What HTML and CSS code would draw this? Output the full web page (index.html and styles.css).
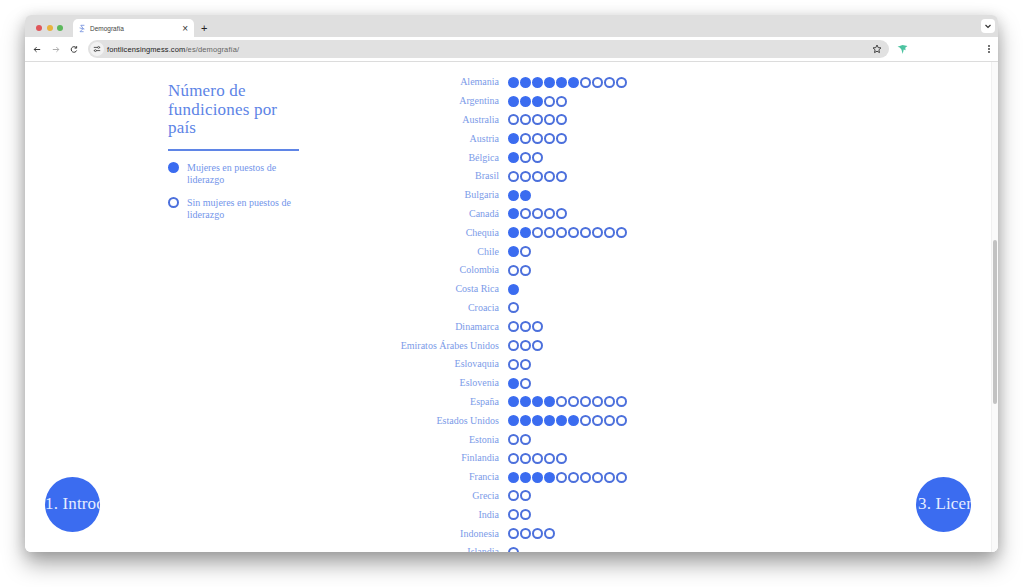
FILE: index.html
```html
<!DOCTYPE html>
<html lang="es">
<head>
<meta charset="utf-8">
<title>Demografía</title>
<link rel="stylesheet" href="styles.css">
</head>
<body>
<div class="window">
  <div class="tabstrip">
    <div class="lights"><i class="red"></i><i class="yellow"></i><i class="green"></i></div>
    <div class="tab">
      <svg class="favicon" viewBox="0 0 10 10"><path d="M8 1H3.500L6.500 5 2.500 9h4.500M2 4.200l6 1.600" fill="none" stroke="#6d8bdc" stroke-width="1"/></svg>
      <span class="tabtitle">Demografía</span>
      <span class="tabclose">×</span>
    </div>
    <span class="newtab">+</span>
    <span class="tabmenu"><svg viewBox="0 0 8 8"><path d="M1.500 3l2.500 2.500L6.500 3" fill="none" stroke="#333" stroke-width="1.200"/></svg></span>
  </div>
  <div class="toolbar">
    <svg class="navicon" viewBox="0 0 10 10"><path d="M9 5H1.500M4.500 2L1.500 5l3 3" fill="none" stroke="#333" stroke-width="1.200"/></svg>
    <svg class="navicon" viewBox="0 0 10 10"><path d="M1 5h7.500M5.500 2l3 3-3 3" fill="none" stroke="#aaa" stroke-width="1.200"/></svg>
    <svg class="navicon" viewBox="0 0 10 10"><path d="M8.300 6.200A3.500 3.500 0 1 1 7.600 2.600M8.300 0.800v2.500H5.800" fill="none" stroke="#333" stroke-width="1.200"/></svg>
    <div class="omnibox">
      <span class="sitechip"><svg viewBox="0 0 10 10"><path d="M1 3h5M8 3h1M1 7h1M4 7h5" stroke="#333" stroke-width="1"/><circle cx="7" cy="3" r="1.200" fill="none" stroke="#333" stroke-width=".8"/><circle cx="3" cy="7" r="1.200" fill="none" stroke="#333" stroke-width=".8"/></svg></span>
      <span class="url"><b>fontlicensingmess.com</b>/es/demografía/</span>
      <svg class="star" viewBox="0 0 10 10"><path d="M5 1l1.200 2.600 2.800.3-2.100 1.900.6 2.800L5 7.200 2.500 8.600l.6-2.800L1 3.900l2.800-.3z" fill="none" stroke="#444" stroke-width="1"/></svg>
    </div>
    <svg class="extension" viewBox="0 0 10 10"><path d="M.5 2.500L5 1l4.500.8-2 1.600.3 2.300-1.700-.8L5.200 9 4 5 2.500 3.200z" fill="#4cc3a0"/></svg>
    <span class="kebab"><i></i><i></i><i></i></span>
  </div>
  <div class="viewport">
    <div class="page">
      <aside class="sidebar">
        <h2 class="heading">Número de fundiciones por país</h2>
        <ul class="legend">
          <li class="legend-item"><span class="dot on"></span><span>Mujeres en puestos de liderazgo</span></li>
          <li class="legend-item"><span class="dot"></span><span>Sin mujeres en puestos de liderazgo</span></li>
        </ul>
      </aside>
      <div class="chart">
        <div class="row"><span class="name">Alemania</span><span class="dots"><i class="dot on"></i><i class="dot on"></i><i class="dot on"></i><i class="dot on"></i><i class="dot on"></i><i class="dot on"></i><i class="dot"></i><i class="dot"></i><i class="dot"></i><i class="dot"></i></span></div>
        <div class="row"><span class="name">Argentina</span><span class="dots"><i class="dot on"></i><i class="dot on"></i><i class="dot on"></i><i class="dot"></i><i class="dot"></i></span></div>
        <div class="row"><span class="name">Australia</span><span class="dots"><i class="dot"></i><i class="dot"></i><i class="dot"></i><i class="dot"></i><i class="dot"></i></span></div>
        <div class="row"><span class="name">Austria</span><span class="dots"><i class="dot on"></i><i class="dot"></i><i class="dot"></i><i class="dot"></i><i class="dot"></i></span></div>
        <div class="row"><span class="name">Bélgica</span><span class="dots"><i class="dot on"></i><i class="dot"></i><i class="dot"></i></span></div>
        <div class="row"><span class="name">Brasil</span><span class="dots"><i class="dot"></i><i class="dot"></i><i class="dot"></i><i class="dot"></i><i class="dot"></i></span></div>
        <div class="row"><span class="name">Bulgaria</span><span class="dots"><i class="dot on"></i><i class="dot on"></i></span></div>
        <div class="row"><span class="name">Canadá</span><span class="dots"><i class="dot on"></i><i class="dot"></i><i class="dot"></i><i class="dot"></i><i class="dot"></i></span></div>
        <div class="row"><span class="name">Chequia</span><span class="dots"><i class="dot on"></i><i class="dot on"></i><i class="dot"></i><i class="dot"></i><i class="dot"></i><i class="dot"></i><i class="dot"></i><i class="dot"></i><i class="dot"></i><i class="dot"></i></span></div>
        <div class="row"><span class="name">Chile</span><span class="dots"><i class="dot on"></i><i class="dot"></i></span></div>
        <div class="row"><span class="name">Colombia</span><span class="dots"><i class="dot"></i><i class="dot"></i></span></div>
        <div class="row"><span class="name">Costa Rica</span><span class="dots"><i class="dot on"></i></span></div>
        <div class="row"><span class="name">Croacia</span><span class="dots"><i class="dot"></i></span></div>
        <div class="row"><span class="name">Dinamarca</span><span class="dots"><i class="dot"></i><i class="dot"></i><i class="dot"></i></span></div>
        <div class="row"><span class="name">Emiratos Árabes Unidos</span><span class="dots"><i class="dot"></i><i class="dot"></i><i class="dot"></i></span></div>
        <div class="row"><span class="name">Eslovaquia</span><span class="dots"><i class="dot"></i><i class="dot"></i></span></div>
        <div class="row"><span class="name">Eslovenia</span><span class="dots"><i class="dot on"></i><i class="dot"></i></span></div>
        <div class="row"><span class="name">España</span><span class="dots"><i class="dot on"></i><i class="dot on"></i><i class="dot on"></i><i class="dot on"></i><i class="dot"></i><i class="dot"></i><i class="dot"></i><i class="dot"></i><i class="dot"></i><i class="dot"></i></span></div>
        <div class="row"><span class="name">Estados Unidos</span><span class="dots"><i class="dot on"></i><i class="dot on"></i><i class="dot on"></i><i class="dot on"></i><i class="dot on"></i><i class="dot on"></i><i class="dot"></i><i class="dot"></i><i class="dot"></i><i class="dot"></i></span></div>
        <div class="row"><span class="name">Estonia</span><span class="dots"><i class="dot"></i><i class="dot"></i></span></div>
        <div class="row"><span class="name">Finlandia</span><span class="dots"><i class="dot"></i><i class="dot"></i><i class="dot"></i><i class="dot"></i><i class="dot"></i></span></div>
        <div class="row"><span class="name">Francia</span><span class="dots"><i class="dot on"></i><i class="dot on"></i><i class="dot on"></i><i class="dot on"></i><i class="dot"></i><i class="dot"></i><i class="dot"></i><i class="dot"></i><i class="dot"></i><i class="dot"></i></span></div>
        <div class="row"><span class="name">Grecia</span><span class="dots"><i class="dot"></i><i class="dot"></i></span></div>
        <div class="row"><span class="name">India</span><span class="dots"><i class="dot"></i><i class="dot"></i></span></div>
        <div class="row"><span class="name">Indonesia</span><span class="dots"><i class="dot"></i><i class="dot"></i><i class="dot"></i><i class="dot"></i></span></div>
        <div class="row"><span class="name">Islandia</span><span class="dots"><i class="dot"></i></span></div>
      </div>
    </div>
    <div class="scrollbar"><div class="thumb"></div></div>
    <a class="bubble prev"><span>1. Introducción</span></a>
    <a class="bubble next"><span>3. Licencias</span></a>
  </div>
</div>
</body>
</html>
```
FILE: styles.css
```css
* { box-sizing: border-box; }
html, body { margin: 0; height: 100%; }
body {
  background: #fff;
  padding: 15px 26px 35px 25px;
  overflow: hidden;
  font-family: "Liberation Serif", serif;
}
.window {
  height: 537px;
  display: flex;
  flex-direction: column;
  border-radius: 6px;
  overflow: hidden;
  box-shadow: 0 12px 22px rgba(0,0,0,.34), 0 2px 14px rgba(0,0,0,.14);
  background: #fff;
}
.tabstrip {
  height: 22px;
  background: #dfdfdf;
  display: flex;
  align-items: flex-end;
  flex: none;
  position: relative;
}
.lights { display: flex; gap: 4.500px; padding: 0 0 6px 11px; width: 48px; }
.lights i { width: 6px; height: 6px; border-radius: 50%; }
.red { background: #e0565a; }
.yellow { background: #e8b33f; }
.green { background: #5cb85c; }
.tab {
  width: 121px;
  height: 18px;
  background: #fff;
  border-radius: 5px 5px 0 0;
  display: flex;
  align-items: center;
  padding: 0 6px 0 5px;
  font: 6.500px "Liberation Sans", sans-serif;
  color: #444;
}
.favicon { width: 8px; height: 9px; margin-right: 4px; }
.tabtitle { flex: 1; }
.tabclose { font-size: 10px; color: #333; }
.newtab { font: 11px "Liberation Sans", sans-serif; color: #222; padding: 0 0 3px 7px; }
.tabmenu {
  position: absolute;
  right: 3px;
  top: 4px;
  width: 14px;
  height: 14px;
  background: #fff;
  border-radius: 4px;
  display: flex;
  padding: 3px;
}
.toolbar {
  height: 25px;
  flex: none;
  background: #fff;
  border-bottom: 1px solid #dcdcdc;
  display: flex;
  align-items: center;
  padding: 0 8px 0 8px;
  gap: 10px;
}
.navicon { width: 8px; height: 9px; flex: none; }
.navicon:nth-of-type(2) { margin-left: 1px; }
.omnibox {
  height: 18px;
  width: 801px;
  background: #e1e1e1;
  border-radius: 9px;
  display: flex;
  align-items: center;
  padding: 0 7px 0 2px;
}
.sitechip {
  width: 14px;
  height: 14px;
  border-radius: 50%;
  background: #f2f2f2;
  display: flex;
  padding: 3px;
  margin-right: 3px;
}
.url { flex: 1; font: 7.500px "Liberation Sans", sans-serif; color: #666; letter-spacing: .12px; }
.url b { font-weight: 400; color: #222; }
.star { width: 10px; height: 10px; }
.extension { width: 11px; height: 11px; margin-left: -2px; }
.kebab { margin-left: auto; display: flex; flex-direction: column; gap: 1px; }
.kebab i { width: 2px; height: 2px; border-radius: 50%; background: #444; }
.viewport {
  flex: 1;
  position: relative;
  overflow: hidden;
  background: #fff;
}
.page {
  display: flex;
  align-items: flex-start;
  padding: 11px 0 0 143px;
  height: 100%;
}
.sidebar { width: 131px; flex: none; padding-top: 9px; color: #6a8ee8; }
.heading {
  margin: 0;
  font-size: 17px;
  line-height: 18.500px;
  font-weight: 400;
  letter-spacing: .2px;
  color: #5d84e6;
  padding-bottom: 11px;
  border-bottom: 2px solid #5f85e6;
}
.legend { list-style: none; margin: 11px 0 0; padding: 0; }
.legend-item {
  display: flex;
  gap: 8px;
  font-size: 10px;
  line-height: 12px;
  margin-bottom: 11px;
  color: #7395ea;
}
.chart { display: flex; flex-direction: column; margin-left: 100px; }
.row { display: flex; align-items: center; height: 18.800px; gap: 9px; }
.name { width: 100px; text-align: right; font-size: 10px; color: #7b9be8; white-space: nowrap; margin-bottom: 1px; }
.dots { display: flex; gap: 1px; }
.dot {
  display: block;
  flex: none;
  width: 11px;
  height: 11px;
  border-radius: 50%;
  border: 2px solid #4c70dc;
  background: #fff;
}
.dot.on { background: #3b6cf0; border-color: #3b6cf0; }
.scrollbar {
  position: absolute;
  top: 0;
  right: 0;
  bottom: 0;
  width: 7px;
  background: #fafafa;
  border-left: 1px solid #f0f0f0;
}
.thumb {
  position: absolute;
  top: 178px;
  left: 1px;
  width: 4px;
  height: 164px;
  border-radius: 2px;
  background: #c2c2c2;
}
.bubble {
  position: absolute;
  top: 415px;
  width: 55px;
  height: 55px;
  border-radius: 50%;
  background: #3b6cf0;
  color: #e6ecff;
  font-size: 17px;
  line-height: 53px;
  overflow: hidden;
  white-space: nowrap;
  letter-spacing: .15px;
}
.bubble span { display: block; }
.prev { left: 20px; }
.next { left: 891px; }
.next span { padding-left: 2px; }
```
